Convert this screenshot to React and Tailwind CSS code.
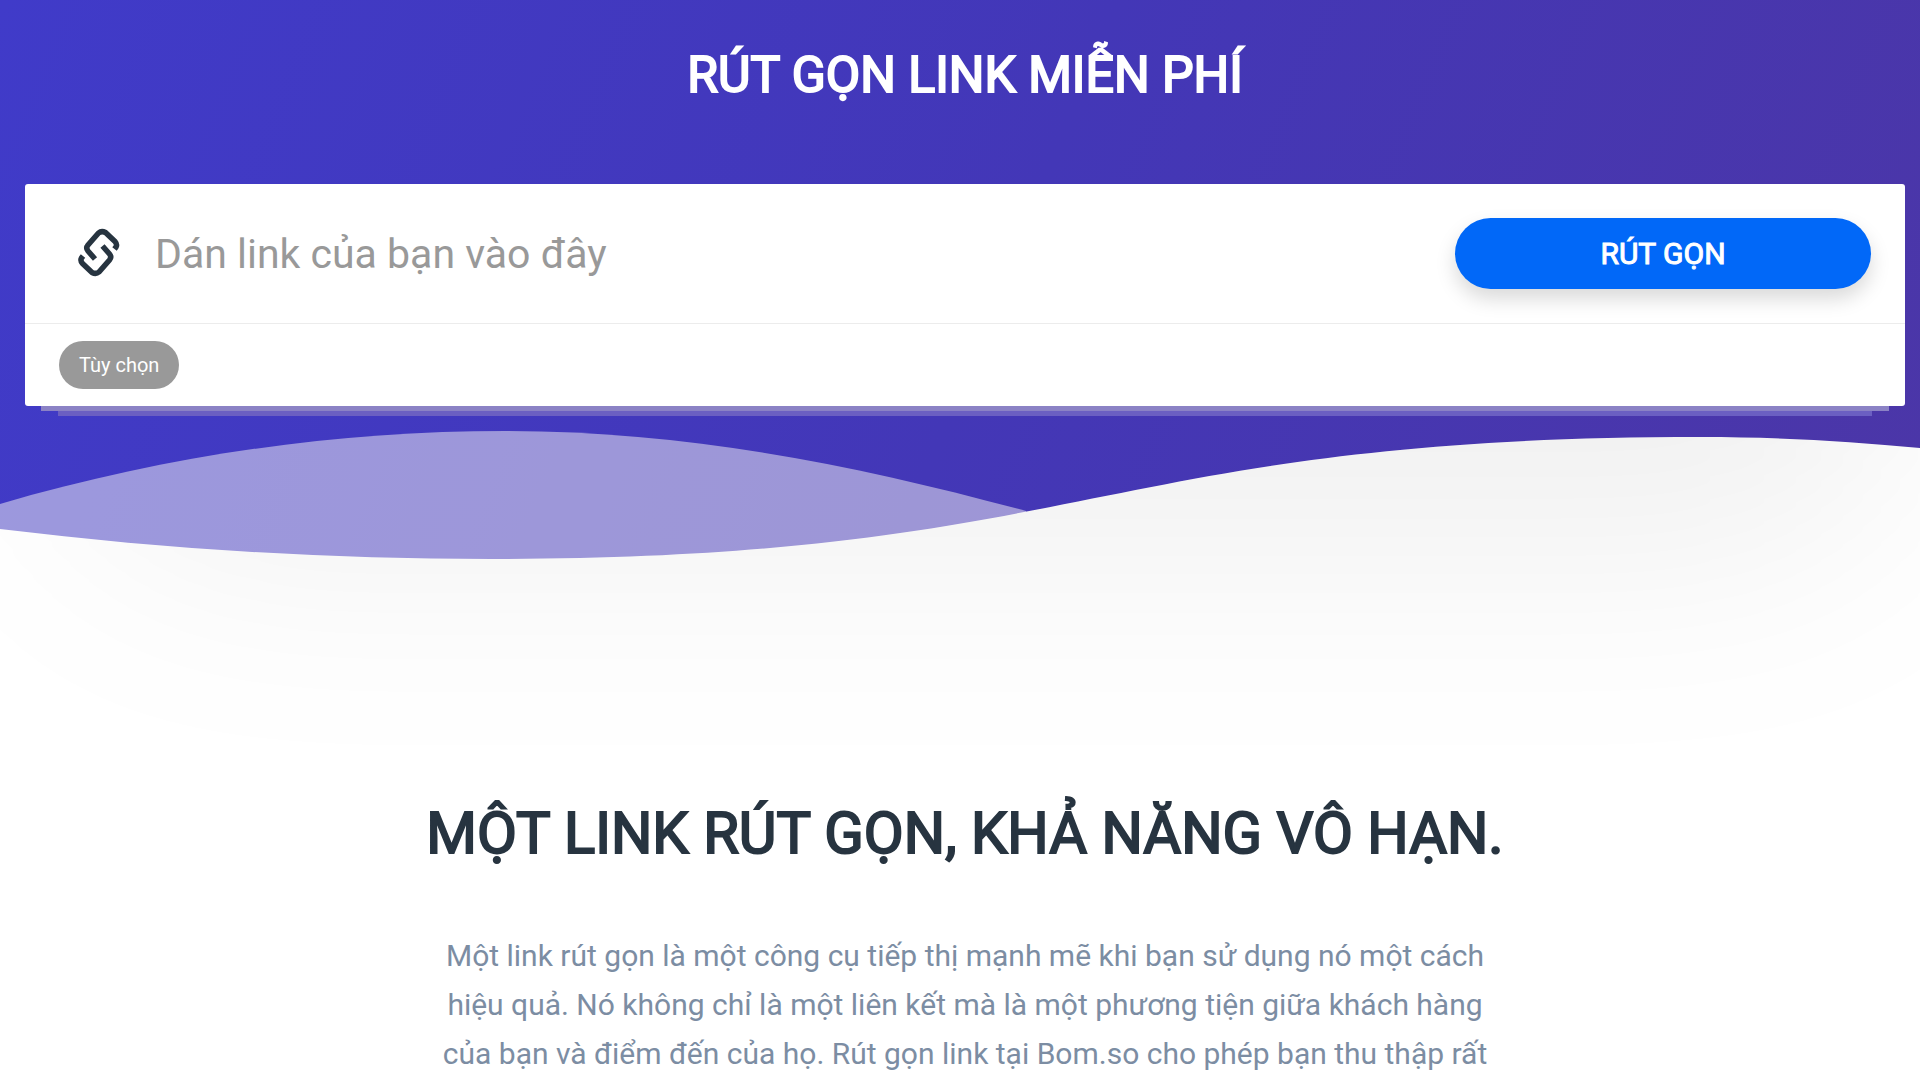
const WAVE = "M0 98C163 118 326 128 490 128C1091 128 1100 6 1701 6C1775 6 1848 10 1920 17V349H0Z";

function LinkIcon() {
  return (
    <svg viewBox="0 0 48 52" className="h-[52px] w-12 shrink-0" fill="none" stroke="#273440" strokeWidth="5.500" strokeLinejoin="round" aria-hidden="true">
      <path d="M21 31L14 23Q11.500 20 14 17L24.500 5Q27.500 2.500 31.500 4.500L41 13.500Q43.500 16.500 42 19L40.500 21" />
      <path d="M28.500 18L35.500 26Q38 29 35.500 32L25 44Q22 46.500 18 44.500L8.500 35.500Q6 32.500 7.500 30L9 28" />
    </svg>
  );
}

function Waves() {
  return (
    <svg viewBox="0 0 1920 349" preserveAspectRatio="none" className="block h-[349px] w-full" aria-hidden="true">
      <defs>
        <clipPath id="ground">
          <path d={WAVE} />
        </clipPath>
        <filter id="soften" filterUnits="userSpaceOnUse" x="-400" y="-1000" width="2720" height="1800">
          <feGaussianBlur stdDeviation="110" />
        </filter>
      </defs>
      <path d="M0 73C168 24 337 0 505 0C690 0 860 35 1026 80V200H0Z" fill="#f7f5f5" fillOpacity="0.5" />
      <path d={WAVE} fill="#fff" />
      <g clipPath="url(#ground)">
        <rect x="70" y="-600" width="1830" height="725" rx="170" fill="#000" fillOpacity="0.06" filter="url(#soften)" />
      </g>
    </svg>
  );
}

export default function App() {
  return (
    <main className="min-h-screen overflow-hidden bg-white font-['Roboto',sans-serif]">
      <header className="bg-linear-[112deg,#403bc9_0%,#4337b7_50%,#4c36a6_100%] pt-[41px]">
        <div className="pr-[15px] pl-[25px]">
          <h1 className="text-center text-[50px] leading-[68px] text-white [-webkit-text-stroke:2px_#fff]">RÚT GỌN LINK MIỄN PHÍ</h1>
          <form className="mt-[75px]" onSubmit={(e) => e.preventDefault()}>
            <div className="rounded-[3px] bg-white">
              <div className="flex items-center border-b border-[#ececec] py-[34px] pr-[34px] pl-[49px]">
                <label htmlFor="url" aria-label="Link">
                  <LinkIcon />
                </label>
                <input
                  id="url"
                  type="text"
                  placeholder="Dán link của bạn vào đây"
                  className="h-[71px] min-w-0 flex-1 pl-[33px] text-[41px] text-gray-800 outline-none placeholder:text-[#999]"
                />
                <button type="submit" className="h-[71px] w-[416px] rounded-full bg-[#0168f8] text-[30px] text-white shadow-[0_10px_20px_rgba(0,0,0,0.15)] [-webkit-text-stroke:1px_#fff]">
                  RÚT GỌN
                </button>
              </div>
              <div className="px-[34px] py-[17px]">
                <button type="button" className="block h-12 rounded-3xl bg-[#999] px-5 text-[20px] text-white">
                  Tùy chọn
                </button>
              </div>
            </div>
            <div className="mx-4 h-[5px] bg-[#8b82c5]" />
            <div className="mx-[33px] h-[5px] bg-[#6b5fc2]" />
          </form>
        </div>
        <div className="mt-[15px]">
          <Waves />
        </div>
      </header>
      <section className="pt-[17px] pr-[15px] pl-[25px] text-center">
        <h2 className="text-[58px] leading-[72px] text-[#273440] [-webkit-text-stroke:2px_#273440]">MỘT LINK RÚT GỌN, KHẢ NĂNG VÔ HẠN.</h2>
        <p className="mx-auto mt-[62px] max-w-[1070px] text-[30px] leading-[49px] text-[#7c8da3]">
          Một link rút gọn là một công cụ tiếp thị mạnh mẽ khi bạn sử dụng nó một cách hiệu quả. Nó không chỉ là một liên kết mà là một phương tiện giữa khách hàng của bạn và điểm đến của họ. Rút gọn link tại Bom.so cho phép bạn thu thập rất
        </p>
      </section>
    </main>
  );
}
